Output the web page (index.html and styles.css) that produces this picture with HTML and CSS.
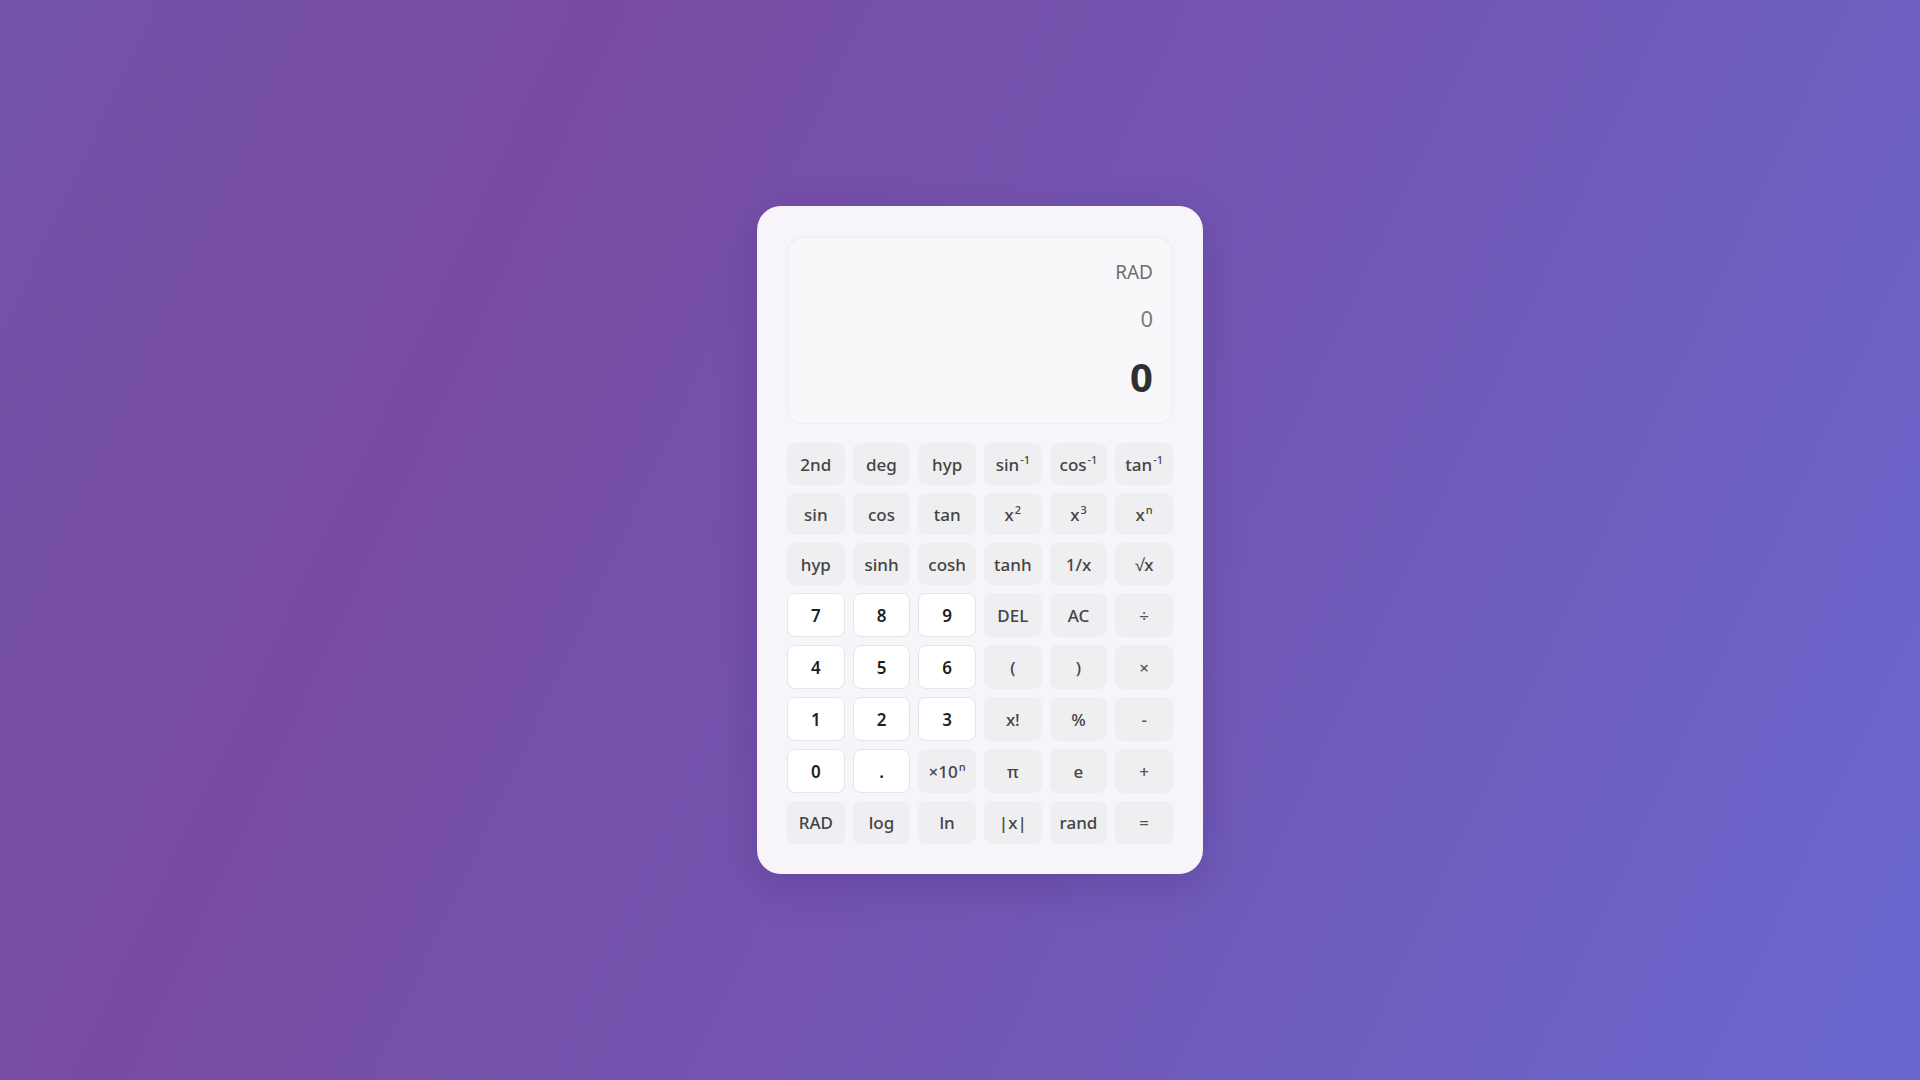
FILE: index.html
```html
<!DOCTYPE html>
<html lang="en">
<head>
<meta charset="utf-8">
<title>Scientific Calculator</title>
<link rel="stylesheet" href="styles.css">
</head>
<body>
<main class="stage">
  <div class="calculator">
    <div class="display">
      <div class="mode">RAD</div>
      <div class="expression">0</div>
      <div class="result">0</div>
    </div>
    <div class="keys">
      <button class="key fn">2nd</button>
      <button class="key fn">deg</button>
      <button class="key fn">hyp</button>
      <button class="key fn">sin<sup>-1</sup></button>
      <button class="key fn">cos<sup>-1</sup></button>
      <button class="key fn">tan<sup>-1</sup></button>

      <button class="key fn">sin</button>
      <button class="key fn">cos</button>
      <button class="key fn">tan</button>
      <button class="key fn">x<sup>2</sup></button>
      <button class="key fn">x<sup>3</sup></button>
      <button class="key fn">x<sup>n</sup></button>

      <button class="key fn">hyp</button>
      <button class="key fn">sinh</button>
      <button class="key fn">cosh</button>
      <button class="key fn">tanh</button>
      <button class="key fn">1/x</button>
      <button class="key fn">√x</button>

      <button class="key num">7</button>
      <button class="key num">8</button>
      <button class="key num">9</button>
      <button class="key fn">DEL</button>
      <button class="key fn">AC</button>
      <button class="key fn op">÷</button>

      <button class="key num">4</button>
      <button class="key num">5</button>
      <button class="key num">6</button>
      <button class="key fn">(</button>
      <button class="key fn">)</button>
      <button class="key fn op">×</button>

      <button class="key num">1</button>
      <button class="key num">2</button>
      <button class="key num">3</button>
      <button class="key fn">x!</button>
      <button class="key fn">%</button>
      <button class="key fn op">-</button>

      <button class="key num">0</button>
      <button class="key num">.</button>
      <button class="key fn">×10<sup>n</sup></button>
      <button class="key fn">π</button>
      <button class="key fn">e</button>
      <button class="key fn op">+</button>

      <button class="key fn last">RAD</button>
      <button class="key fn last">log</button>
      <button class="key fn last">ln</button>
      <button class="key fn last">|x|</button>
      <button class="key fn last">rand</button>
      <button class="key fn op last">=</button>
    </div>
  </div>
</main>
</body>
</html>
```

FILE: styles.css
```css
* { box-sizing: border-box; }

html, body {
  margin: 0;
  height: 100%;
}

body {
  font-family: "Noto Sans", "Open Sans", sans-serif;
  background: linear-gradient(115deg, #7452aa 0%, #794ca3 25%, #7157b4 60%, #6a68d0 100%);
}

.stage {
  height: 100%;
  display: flex;
  align-items: center;
  justify-content: center;
}

.calculator {
  width: 446px;
  margin-left: 40px;
  padding: 30px;
  background: #f7f5fa;
  border-radius: 24px;
  box-shadow: 0 12px 40px rgba(40, 10, 80, 0.18);
  display: flex;
  flex-direction: column;
  gap: 19px;
}

.display {
  background: #f8f8fb;
  border-radius: 16px;
  border: 1px solid #efedf2;
  box-shadow: inset 0 1px 3px rgba(0, 0, 0, 0.03);
  padding: 21px 19px 19px;
  display: flex;
  flex-direction: column;
  align-items: flex-end;
}

.mode {
  font-size: 19px;
  line-height: 28px;
  color: #6f6f6f;
}

.expression {
  margin-top: 17px;
  font-size: 22px;
  line-height: 30px;
  color: #7a7a7a;
}

.result {
  margin-top: 17px;
  font-size: 40px;
  line-height: 54px;
  font-weight: 700;
  color: #2f2f2f;
}

.keys {
  display: grid;
  grid-template-columns: repeat(6, 1fr);
  gap: 8px;
}

.key {
  font-family: inherit;
  font-size: 17px;
  min-height: 42px;
  padding: 0;
  border-radius: 8px;
  border: none;
  display: flex;
  align-items: center;
  justify-content: center;
  cursor: pointer;
}

.key sup {
  font-size: 11px;
  line-height: 0;
  position: relative;
  top: -4px;
  margin-left: 1px;
}

.fn {
  background: #efeef1;
  color: #444;
  font-weight: 500;
}

.op {
  color: #555;
}

.last {
  min-height: 43px;
}

.num {
  background: #ffffff;
  border: 1px solid #e6e4ea;
  color: #1f1f1f;
  font-weight: 600;
  min-height: 44px;
}
```
